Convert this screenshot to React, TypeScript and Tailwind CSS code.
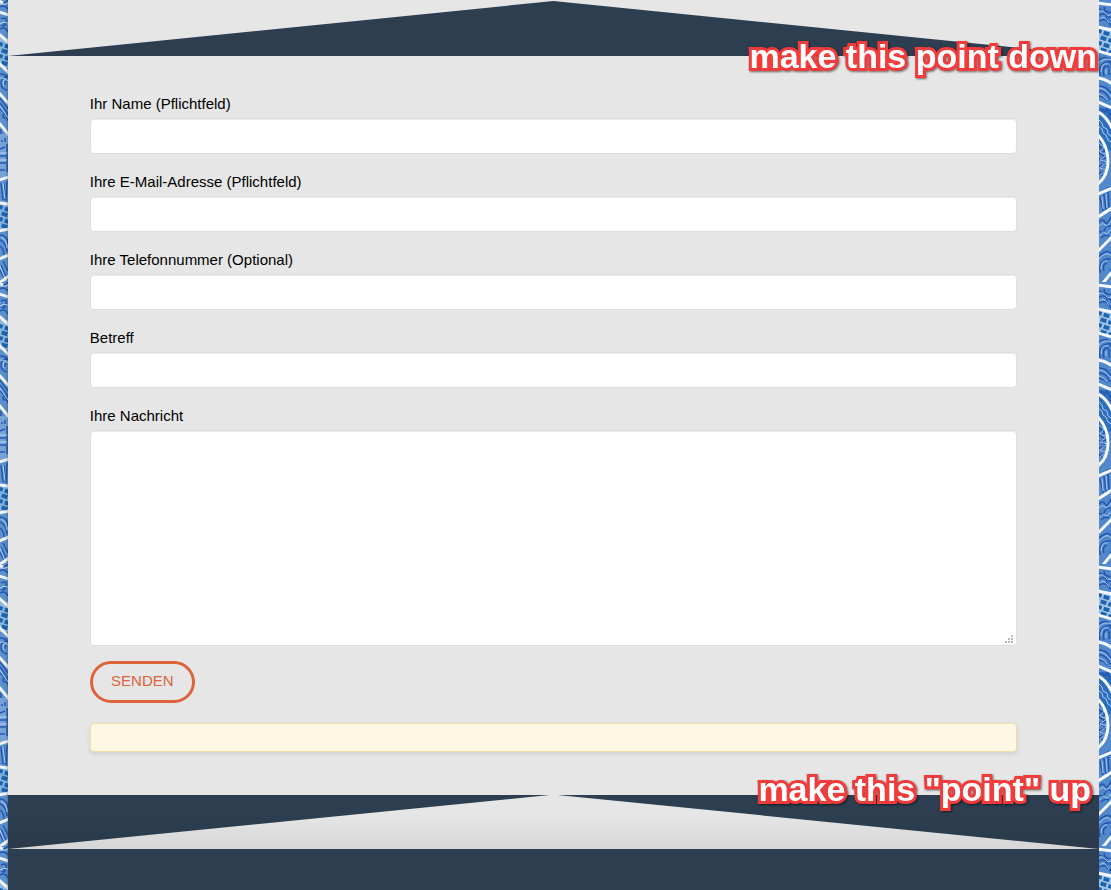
const fields = [
  { id: "name", label: "Ihr Name (Pflichtfeld)", type: "text" },
  { id: "email", label: "Ihre E-Mail-Adresse (Pflichtfeld)", type: "email" },
  { id: "phone", label: "Ihre Telefonnummer (Optional)", type: "tel" },
  { id: "subject", label: "Betreff", type: "text" },
];

const controlClass =
  "block w-full rounded border border-[#dddddd] bg-white px-3 text-[15px] shadow-[inset_0_1px_1px_rgba(0,0,0,0.075)] outline-none";

const noteClass =
  "absolute z-10 whitespace-nowrap text-[34px] leading-10 font-bold text-white [-webkit-text-stroke:6px_#f23c3c] [paint-order:stroke_fill] drop-shadow-[1px_1px_1px_rgba(0,0,0,0.55)]";

function Bricks({ y }: { y: number }) {
  return (
    <g stroke="#1d64b0" strokeWidth="4" strokeDasharray="6 2">
      <path d={`M-3 ${y} l18 6`} />
      <path d={`M-6 ${y + 5} l22 7`} />
      <path d={`M-3 ${y + 12} l18 6`} />
      <path d={`M-6 ${y + 17} l22 7`} />
    </g>
  );
}

function LeftPattern() {
  return (
    <svg className="absolute inset-0 h-full w-full" aria-hidden="true">
      <defs>
        <pattern id="mosaic-left" width="8" height="282" patternUnits="userSpaceOnUse">
          <rect width="8" height="282" fill="#5d91cc" />
          <rect y="38" width="8" height="30" fill="#8db7dd" />
          <rect y="134" width="8" height="44" fill="#76a2d7" />
          <rect y="205" width="8" height="25" fill="#87b3de" />
          <g fill="none" stroke="#2458b3" strokeWidth="1.5">
            <path d="M0 2q5 2 8-2M0 7q4-3 8 2M1 19q6-3 5 3t-5 3M0 29q5-3 8 3M3 24h3" />
            <path d="M0 74q6 0 8 4M7 77q-6 0-6 6t6 7M7 81q-3 1-2 4" />
            <path d="M0 98l8 11M0 103l8 11M0 109q6 4 8 12M3 116a2 2 0 1 0 4 0a2 2 0 1 0-4 0" />
            <path d="M1 129v5M5 138v4M1 141h2M0 149l5-2M0 156h6M0 163h6M0 170h5M7 144v28" />
            <path d="M1 183l2 17M4 183l1 17M7 181l-1 20" />
            <path d="M0 235q8 1 8 9M0 240q6 2 7 12M0 246q4 3 4 9" />
            <path d="M1 265l6 14M3 261l5 10M0 270l5 10" />
          </g>
          <g fill="none" stroke="#bad5ed" strokeWidth="1">
            <path d="M0 4q5 1 8-1M0 24q4-3 8-1M0 78q3-1 8 3M4 80q-2 3 0 6M0 106l8 12" />
            <path d="M3 183l2 16M1 237q6 3 6 11M0 266l6 15M0 153h7M0 160h7" />
          </g>
          <Bricks y={43} />
          <Bricks y={206} />
          <path
            d="M-1 12l10 3M-1 34l10 9M-1 63l10 10M-1 93l10 11M-1 123l10 12M-1 180l10-3M-1 203l10 1M-1 231l10-2M-1 259l10-4M-1 283l10-7M-1 1l4 2"
            fill="none"
            stroke="#eef3f5"
            strokeWidth="3"
          />
        </pattern>
      </defs>
      <rect width="100%" height="100%" fill="url(#mosaic-left)" />
    </svg>
  );
}

function RightPattern() {
  return (
    <svg className="absolute inset-0 h-full w-full" aria-hidden="true">
      <defs>
        <pattern id="mosaic-right" width="12" height="282" patternUnits="userSpaceOnUse">
          <rect width="12" height="282" fill="#5189cb" />
          <rect y="28" width="12" height="25" fill="#a4c6e6" />
          <rect y="108" width="12" height="42" fill="#2d6fbc" />
          <g fill="none" stroke="#2456af" strokeWidth="1.5">
            <path d="M0 9l12 4M0 15q7-3 12 4M0 21q8-4 12 5M5 7l4 16" />
            <path d="M0 60q10-7 12 5M1 76q-2-12 7-14t4 14M5 76q-2-8 2-10t3 9" />
            <path d="M0 86q8 0 12 8M0 91q8 0 11 9M0 96q6 1 8 5M2 109l4 3l2-3l4 8" />
            <path d="M0 146l7 5l-7 2l8 5l-8 1l8 5l-8 2l7 5l-7 2l6 4" />
            <path d="M1 197l3 14M5 194l2 16M9 192l1 16M2 192l9-5" />
            <path d="M0 222q4-4 6 0t6-5M0 231q4 3 6-2t6-2M2 238q4-4 8-2" />
            <path d="M0 256q10-8 12-2M1 273q-2-12 7-14t3 13M5 271q-2-7 3-8" />
          </g>
          <g fill="none" stroke="#a8c7ea" strokeWidth="1">
            <path d="M0 12q4-3 6 1t6 2M1 19q4-5 9 4M2 72q0-10 7-8M0 63q5-6 12-3M7 74v-5" />
            <path d="M0 88q7 0 12 9M0 94q5 1 8 6M0 120l3 3l1 4l4 2l1 5l3 2M0 127l3 2l1 4l3 2l2 5l3 2" />
            <path d="M0 143l5 4l-4 5l7 3l-7 5l7 2l-7 6l6 2l-6 5M3 197l1 12M7 194l1 14" />
            <path d="M0 226q4-4 6-1t6-4M1 236q3-6 5-3t5-3M2 269q0-9 6-8M0 259q8-9 12-3" />
          </g>
          <Bricks y={30} />
          <path
            d="M-1 3l14 2M-1 27l14 3M-1 51l14 4M-1 78q8 1 14 6M-1 102l14 6M-1 112q8 4 14 16M-1 135q10 11 10 26t-10 23M-1 194l14-6M-1 217l14-9M-1 251l14-14M-1 289l14-17"
            fill="none"
            stroke="#f7f8fb"
            strokeWidth="3"
          />
        </pattern>
      </defs>
      <rect width="100%" height="100%" fill="url(#mosaic-right)" />
    </svg>
  );
}

export default function App() {
  return (
    <div className="flex min-h-screen overflow-hidden bg-[#5189cb] font-['Liberation_Sans',Arial,sans-serif] text-[15px] text-black">
      <div className="relative w-2 shrink-0">
        <LeftPattern />
      </div>

      <main className="relative flex min-w-0 flex-1 flex-col bg-[#e6e6e6] shadow-[0_0_3px_rgba(0,0,0,0.4)]">
        <header className="relative pt-px">
          <svg
            className="block h-[55px] w-full"
            viewBox="0 0 100 55"
            preserveAspectRatio="none"
            aria-hidden="true"
          >
            <polygon points="0,55 50,0 100,55" fill="#2d3e50" />
          </svg>
          <p className={`${noteClass} top-9 right-0.5`}>make this point down</p>
        </header>

        <form
          className="mx-auto w-[85%] pt-9 pb-[43px]"
          onSubmit={(e) => e.preventDefault()}
        >
          {fields.map((field) => (
            <div key={field.id} className="mb-4">
              <label htmlFor={field.id} className="mb-0.5 block leading-6">
                {field.label}
              </label>
              <input id={field.id} type={field.type} className={`${controlClass} h-9`} />
            </div>
          ))}

          <label htmlFor="message" className="mb-0.5 block leading-6">
            Ihre Nachricht
          </label>
          <div className="relative">
            <textarea id="message" className={`${controlClass} h-[216px] resize-none py-2`} />
            <svg
              className="pointer-events-none absolute right-1 bottom-[3px] h-2 w-2"
              viewBox="0 0 8 8"
              fill="#b8b8b8"
              aria-hidden="true"
            >
              <path d="M6 0h2v2H6zM3 3h2v2H3zM6 3h2v2H6zM0 6h2v2H0zM3 6h2v2H3zM6 6h2v2H6z" />
            </svg>
          </div>

          <button
            type="submit"
            className="mt-[15px] block h-[42px] w-[105px] rounded-full border-3 border-[#db643a] pb-0.5 text-[15px] text-[#db643a]"
          >
            SENDEN
          </button>

          <div
            role="status"
            className="mt-5 h-[29px] rounded border border-[#f6dca6] bg-[#fef7e3] shadow-[0_2px_4px_rgba(0,0,0,0.1)]"
          />
        </form>

        <section className="relative">
          <svg
            className="block h-[54px] w-full bg-[#2d3e50]"
            viewBox="0 0 100 54"
            preserveAspectRatio="none"
            aria-hidden="true"
          >
            <defs>
              <linearGradient id="shade" x1="0" y1="0" x2="0" y2="1">
                <stop offset="0.35" stopColor="#000" stopOpacity="0" />
                <stop offset="1" stopColor="#000" stopOpacity="0.07" />
              </linearGradient>
            </defs>
            <polygon points="0,54 50,-0.4 100,54" fill="#e6e6e6" />
            <rect width="100" height="54" fill="url(#shade)" />
          </svg>
          <p className={`${noteClass} right-2 bottom-10`}>make this "point" up</p>
        </section>
        <footer className="min-h-[41px] flex-1 bg-[#2d3e50]" />
      </main>

      <div className="relative w-3 shrink-0">
        <RightPattern />
      </div>
    </div>
  );
}
